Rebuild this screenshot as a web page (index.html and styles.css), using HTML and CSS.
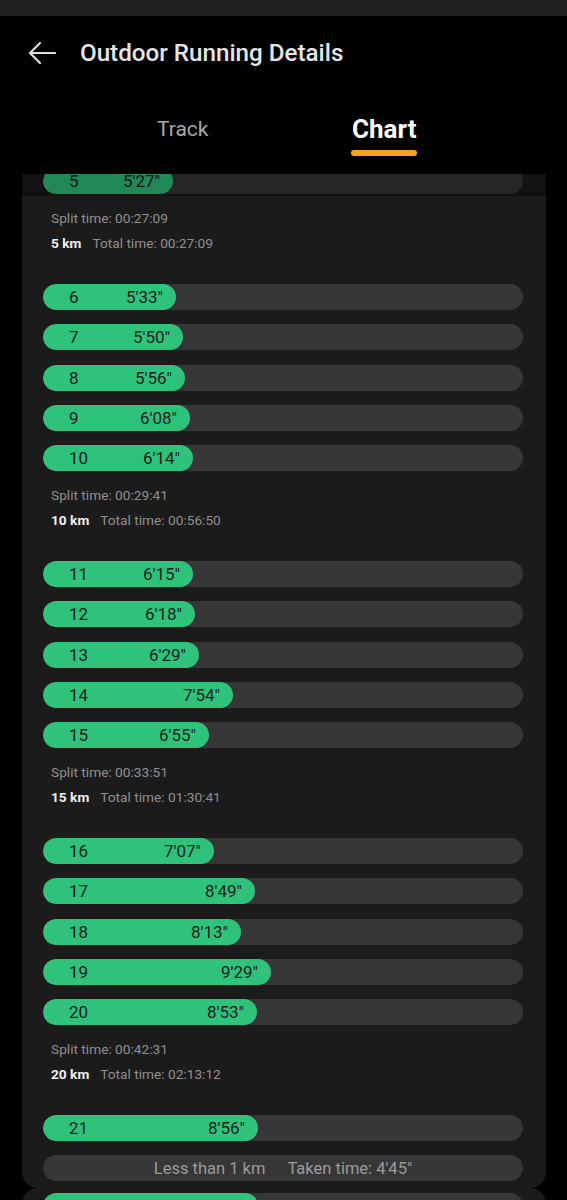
FILE: index.html
```html
<!DOCTYPE html>
<html lang="en">
<head>
    <meta charset="UTF-8">
    <meta name="viewport" content="width=device-width, initial-scale=1.0">
    <title>Outdoor Running Details</title>
    <link rel="stylesheet" href="styles.css">
</head>
<body>
    <div class="status-bar"></div>
    <header class="top-bar">
        <button class="back-btn" aria-label="Back">
            <svg width="28" height="24" viewBox="0 0 28 24" fill="none" stroke="currentColor" stroke-width="2.2" stroke-linecap="round" stroke-linejoin="round">
                <path d="M27 12H2"/>
                <path d="M12 2L2 12L12 22"/>
            </svg>
        </button>
        <h1>Outdoor Running Details</h1>
    </header>
    <nav class="tabs">
        <div class="tab">Track</div>
        <div class="tab active">Chart<span class="tab-line"></span></div>
    </nav>

    <main class="scroll">
        <section class="card">
            <div class="group first">
                <div class="rows">
                    <div class="bar"><div class="fill" style="width:130px"><span>5</span><span>5′27″</span></div></div>
                </div>
                <div class="summary">
                    <p class="split">Split time: 00:27:09</p>
                    <p class="total"><b>5 km</b><span>Total time: 00:27:09</span></p>
                </div>
            </div>

            <div class="group">
                <div class="rows">
                    <div class="bar"><div class="fill" style="width:133px"><span>6</span><span>5′33″</span></div></div>
                    <div class="bar"><div class="fill" style="width:140px"><span>7</span><span>5′50″</span></div></div>
                    <div class="bar"><div class="fill" style="width:142px"><span>8</span><span>5′56″</span></div></div>
                    <div class="bar"><div class="fill" style="width:147px"><span>9</span><span>6′08″</span></div></div>
                    <div class="bar"><div class="fill" style="width:150px"><span>10</span><span>6′14″</span></div></div>
                </div>
                <div class="summary">
                    <p class="split">Split time: 00:29:41</p>
                    <p class="total"><b>10 km</b><span>Total time: 00:56:50</span></p>
                </div>
            </div>

            <div class="group">
                <div class="rows">
                    <div class="bar"><div class="fill" style="width:150px"><span>11</span><span>6′15″</span></div></div>
                    <div class="bar"><div class="fill" style="width:152px"><span>12</span><span>6′18″</span></div></div>
                    <div class="bar"><div class="fill" style="width:156px"><span>13</span><span>6′29″</span></div></div>
                    <div class="bar"><div class="fill" style="width:190px"><span>14</span><span>7′54″</span></div></div>
                    <div class="bar"><div class="fill" style="width:166px"><span>15</span><span>6′55″</span></div></div>
                </div>
                <div class="summary">
                    <p class="split">Split time: 00:33:51</p>
                    <p class="total"><b>15 km</b><span>Total time: 01:30:41</span></p>
                </div>
            </div>

            <div class="group">
                <div class="rows">
                    <div class="bar"><div class="fill" style="width:171px"><span>16</span><span>7′07″</span></div></div>
                    <div class="bar"><div class="fill" style="width:212px"><span>17</span><span>8′49″</span></div></div>
                    <div class="bar"><div class="fill" style="width:198px"><span>18</span><span>8′13″</span></div></div>
                    <div class="bar"><div class="fill" style="width:228px"><span>19</span><span>9′29″</span></div></div>
                    <div class="bar"><div class="fill" style="width:214px"><span>20</span><span>8′53″</span></div></div>
                </div>
                <div class="summary">
                    <p class="split">Split time: 00:42:31</p>
                    <p class="total"><b>20 km</b><span>Total time: 02:13:12</span></p>
                </div>
            </div>

            <div class="rows last">
                <div class="bar"><div class="fill" style="width:215px"><span>21</span><span>8′56″</span></div></div>
                <div class="bar rest"><span>Less than 1 km</span><span>Taken time: 4′45″</span></div>
            </div>
        </section>

        <section class="card card-next">
            <div class="rows">
                <div class="bar"><div class="fill" style="width:215px"><span>21</span><span>8′56″</span></div></div>
            </div>
        </section>
    </main>
</body>
</html>
```

FILE: styles.css
```css
* {
    box-sizing: border-box;
}
body {
    margin: 0;
    background-color: #000;
    color: #e8e8e8;
    font-family: Roboto, 'Noto Sans', sans-serif;
    height: 1200px;
    overflow: hidden;
}
.status-bar {
    height: 16px;
    background-color: #1e1e1e;
}
.top-bar {
    display: flex;
    align-items: center;
    height: 74px;
    padding-left: 28px;
    gap: 24px;
}
.back-btn {
    background: none;
    border: none;
    padding: 0;
    color: #dedede;
    display: flex;
}
.top-bar h1 {
    margin: 0;
    font-size: 24.2px;
    font-weight: 500;
    color: #e6e6e6;
}
.tabs {
    display: grid;
    grid-template-columns: 1fr 1fr;
    padding: 25px 82px 18px;
    height: 84px;
}
.tab {
    display: flex;
    flex-direction: column;
    align-items: center;
    font-size: 21px;
    line-height: 28px;
    color: #a8a8a8;
}
.tab.active {
    font-size: 26px;
    font-weight: 700;
    color: #fff;
}
.tab-line {
    display: block;
    width: 66px;
    height: 6px;
    margin-top: 7px;
    border-radius: 3px;
    background-color: #f7a21b;
}
.scroll {
    position: relative;
    height: 1026px;
    overflow: hidden;
}
.scroll::before {
    content: '';
    position: absolute;
    left: 0;
    right: 0;
    top: 0;
    height: 22px;
    background: rgba(0, 0, 0, 0.3);
    z-index: 2;
}
.card {
    width: 524px;
    margin-left: 22px;
    padding: 0 23px 7px 21px;
    background-color: #1b1b1b;
    border-radius: 0 0 16px 16px;
}
.card-next {
    padding-top: 5px;
    border-radius: 16px 16px 0 0;
}
.group.first {
    margin-top: -6px;
}
.rows {
    display: flex;
    flex-direction: column;
    gap: 14.25px;
}
.bar {
    height: 26px;
    border-radius: 13px;
    background-color: #363636;
    overflow: hidden;
}
.fill {
    height: 100%;
    display: flex;
    align-items: center;
    justify-content: space-between;
    padding: 0 13px 0 26px;
    border-radius: 13px;
    background-color: #2fc27b;
    color: #15231b;
    font-size: 17px;
    white-space: nowrap;
}
.bar.rest {
    display: flex;
    align-items: center;
    justify-content: center;
    gap: 22px;
    color: #9b9b9b;
    font-size: 16.5px;
}
.summary {
    padding: 14px 0 31px 8px;
    display: flex;
    flex-direction: column;
    gap: 5px;
}
.summary p {
    margin: 0;
    line-height: 20px;
    font-size: 13.7px;
    color: #8f8f8f;
}
.total b {
    color: #f0f0f0;
    font-weight: 700;
    margin-right: 11px;
}
```
